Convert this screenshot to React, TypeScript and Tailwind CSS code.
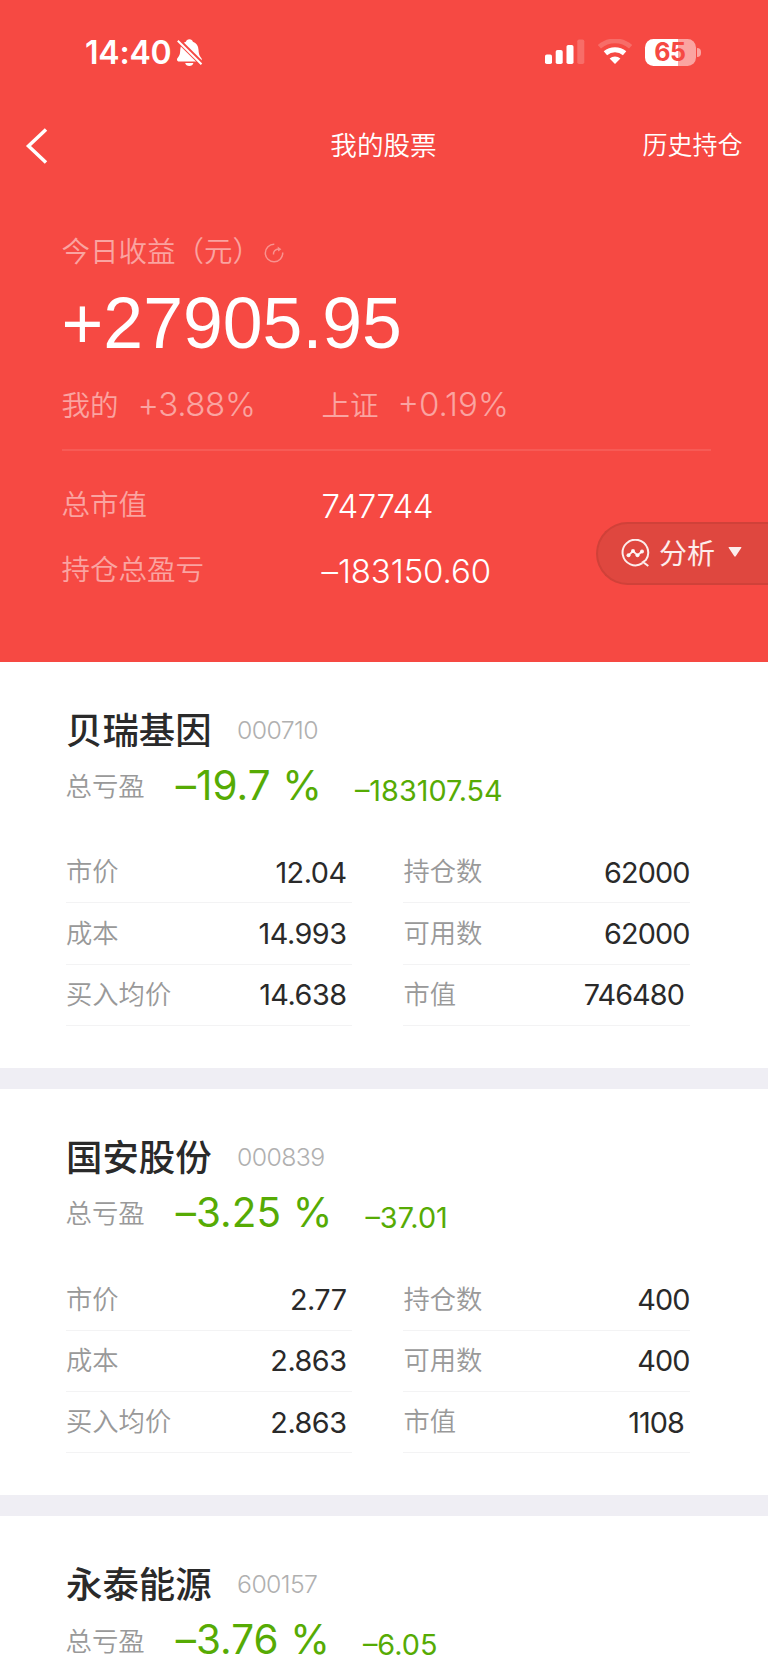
interface Cell {
  label: string;
  value: string;
}

interface Stock {
  name: string;
  code: string;
  percent: string;
  amount: string;
  left: Cell[];
  right: Cell[];
}

const stocks: Stock[] = [
  {
    name: "贝瑞基因",
    code: "000710",
    percent: "–19.7 %",
    amount: "–183107.54",
    left: [
      { label: "市价", value: "12.04" },
      { label: "成本", value: "14.993" },
      { label: "买入均价", value: "14.638" },
    ],
    right: [
      { label: "持仓数", value: "62000" },
      { label: "可用数", value: "62000" },
      { label: "市值", value: "746480" },
    ],
  },
  {
    name: "国安股份",
    code: "000839",
    percent: "–3.25 %",
    amount: "–37.01",
    left: [
      { label: "市价", value: "2.77" },
      { label: "成本", value: "2.863" },
      { label: "买入均价", value: "2.863" },
    ],
    right: [
      { label: "持仓数", value: "400" },
      { label: "可用数", value: "400" },
      { label: "市值", value: "1108" },
    ],
  },
  {
    name: "永泰能源",
    code: "600157",
    percent: "–3.76 %",
    amount: "–6.05",
    left: [],
    right: [],
  },
];

const StatusBar = () => (
  <div className="flex h-[104px] items-center pl-[85px] pr-[67.5px]">
    <span className="mt-[2px] text-[32px] font-semibold leading-none tracking-[-0.2px]">14:40</span>
    <svg className="ml-[6px] mt-[1px]" width="26" height="28" viewBox="0 0 26 28" fill="none">
      <path
        d="M12.4 0.3c1.9 0 3.1 1 3.5 2.4 3.6 1.2 5.4 4.2 5.6 8.1.2 4 .8 5.6 2 7.2.8 1 1.3 1.7 1.3 2.6 0 1.3-.9 1.9-2.4 1.9H2.4C.9 22.5 0 21.9 0 20.7c0-2 2.5-3 3-6.7.5-5.2.3-9.8 5.9-11.3.4-1.4 1.6-2.4 3.5-2.4z"
        fill="#fff"
      />
      <path d="M8.2 23.9h8.2c-.4 1.9-2 3-4.1 3s-3.7-1.1-4.1-3z" fill="#fff" />
      <path d="M0 0.3L25.5 25.5" stroke="#f64943" strokeWidth="5" />
      <path d="M0.8 1.7L24.5 25.2" stroke="#fff" strokeWidth="2" />
    </svg>

    <div className="ml-auto flex items-center">
      <svg width="40" height="26" viewBox="0 0 40 26" fill="#fff">
        <rect x="0" y="15.5" width="7" height="9.5" rx="1.8" />
        <rect x="10.7" y="11" width="7" height="14" rx="1.8" />
        <rect x="21.5" y="6" width="7" height="19" rx="1.8" />
        <rect x="32.3" y="0.5" width="7" height="24.5" rx="1.8" opacity="0.2" />
      </svg>
      <svg className="ml-[12px]" width="36" height="26" viewBox="0 0 36 26" fill="none" stroke="#fff">
        <path d="M2.4 7.8a23.6 23.6 0 0 1 31.2 0" strokeWidth="4.8" opacity="0.2" />
        <path d="M8.4 14.3a14.8 14.8 0 0 1 19.2 0" strokeWidth="5.2" />
        <path d="M12.6 19.4a8.6 8.6 0 0 1 10.8 0L18 25z" fill="#fff" stroke="none" />
      </svg>
      <div className="ml-[12px] flex h-[27px] w-[51px] items-center justify-center rounded-[8.5px] bg-[linear-gradient(90deg,#fff_65%,rgba(255,255,255,0.5)_65%)]">
        <span className="text-[25px] font-bold leading-none tracking-[-0.4px] text-[#f64943]">65</span>
      </div>
      <div className="ml-[1.5px] h-[9px] w-[3.5px] rounded-r-full bg-white/50" />
    </div>
  </div>
);

const NavBar = () => (
  <div className="grid h-[83px] grid-cols-3 items-center pl-[24.5px] pr-[25.5px]">
    <svg width="24" height="36" viewBox="0 0 24 36" fill="none" stroke="#fff" strokeWidth="3.5">
      <path d="M21 1.5L3.5 18L21 34.5" />
    </svg>
    <h1 className="text-center text-[26.6px] font-[350] leading-none">我的股票</h1>
    <span className="text-right text-[25px] font-[350] leading-none">历史持仓</span>
  </div>
);

const Summary = () => (
  <div className="flex flex-col pl-[61.5px] pr-[57px] pt-[45px]">
    <div className="flex h-[40px] items-center text-[28.5px] font-[350] text-white/50">
      <span className="whitespace-nowrap">今日收益（元）</span>
      <svg className="ml-[3px] mt-[1px]" width="20" height="20" viewBox="0 0 20 20" fill="none" stroke="#fff" strokeWidth="1.5" opacity="0.4">
        <path d="M10.3 1.3A8.7 8.7 0 1 0 18.7 9.5" />
        <path d="M9.5 11.5c-.4-3 1.5-5.3 5.5-5.4" />
        <path d="M13.6 3.4L17.4 6.2L14.2 8.6z" fill="#fff" stroke="none" />
      </svg>
    </div>
    <div className="flex h-[104px] items-center font-['Liberation_Sans',sans-serif] text-[71.6px] leading-none">
      +27905.95
    </div>
    <div className="mt-px flex h-[58px] items-center text-white/50">
      <div className="flex w-[260px] items-center">
        <span className="text-[28.5px] font-[350]">我的</span>
        <span className="-mt-[2px] ml-[19px] text-[33px] font-[350] tracking-[-0.4px]">+3.88%</span>
      </div>
      <span className="text-[28.5px] font-[350]">上证</span>
      <span className="-mt-[2px] ml-[19px] text-[33px] font-[350]">+0.19%</span>
    </div>
    <div className="mt-[14px] h-[2px] bg-white/10" />
    <div className="mt-[22px] flex h-[65px] items-center">
      <span className="w-[260px] text-[28.5px] font-[350] text-white/50">总市值</span>
      <span className="mt-[2px] text-[33px] font-[350] tracking-[-0.5px]">747744</span>
    </div>
    <div className="flex h-[65px] items-center">
      <span className="w-[260px] text-[28.5px] font-[350] text-white/50">持仓总盈亏</span>
      <span className="mt-[2px] text-[33px] font-[350] tracking-[-0.1px]">–183150.60</span>
    </div>
  </div>
);

const AnalysisButton = () => (
  <button className="absolute right-0 top-[522px] flex h-[63px] w-[172px] items-center rounded-l-full border-2 border-r-0 border-[#d04139] bg-[#df473f] pl-[23px] text-white/90">
    <svg className="-mt-[1px]" width="29" height="29" viewBox="0 0 29 29" fill="none" stroke="currentColor" strokeWidth="2">
      <path d="M21.5 24.2A12.8 12.8 0 1 1 24.8 21L22 23L27.3 27" />
      <path d="M7.5 16.3L12 12L16.5 16.3L21 12.5" strokeWidth="1.8" />
      <g fill="currentColor" stroke="none">
        <circle cx="7.5" cy="16.3" r="2" />
        <circle cx="12" cy="12" r="2" />
        <circle cx="16.5" cy="16.3" r="2" />
        <circle cx="21" cy="12.5" r="2" />
      </g>
    </svg>
    <span className="ml-[9px] text-[28px] leading-none">分析</span>
    <svg className="-mt-[4px] ml-[13px]" width="14" height="10" viewBox="0 0 14 10" fill="currentColor">
      <path d="M1.3 0h11.4c.7 0 .9.5.5 1L7.7 9.3c-.4.6-1 .6-1.4 0L.8 1C.4.5.6 0 1.3 0z" />
    </svg>
  </button>
);

const CellColumn = ({ cells, inset }: { cells: Cell[]; inset?: boolean }) => (
  <div className="flex w-[286.5px] flex-col">
    {cells.map((c) => (
      <div
        key={c.label}
        className={`flex h-[61.4px] items-center justify-between border-b-[1.5px] border-[#f3f3f4] pl-[0.5px] ${
          inset || c.label === "市值" ? "pr-[5.5px]" : ""
        }`}
      >
        <span className="text-[26.3px] font-[350] text-[#999]">{c.label}</span>
        <span
          className={`text-[28.8px] font-normal text-[#2a2a2a] ${
            inset ? "tracking-[-0.5px]" : "tracking-[-0.9px]"
          }`}
        >
          {c.value}
        </span>
      </div>
    ))}
  </div>
);

const StockCard = ({ stock }: { stock: Stock }) => (
  <section className="h-[427.2px] shrink-0 border-b-[21px] border-[#efeef4] bg-white pl-[65.5px] pt-[44.5px]">
    <div className="flex h-[50px] items-center">
      <h2 className="ml-[0.5px] text-[36.4px] font-medium leading-none text-[#2a2a2a]">{stock.name}</h2>
      <span className="-mt-[2px] ml-[25.5px] text-[24.8px] font-light leading-none tracking-[-0.6px] text-[#b0b0b0]">
        {stock.code}
      </span>
    </div>
    <div className="flex h-[60px] items-center whitespace-nowrap">
      <span className="mt-px text-[26.4px] font-[350] leading-none text-[#999]">总亏盈</span>
      <span className="ml-[31px] text-[40.4px] font-normal leading-none tracking-[0.1px] text-[#56ab04]">
        {stock.percent}
      </span>
      <span className="ml-[33px] mt-[11px] text-[28.8px] font-normal leading-none text-[#56ab04]">
        {stock.amount}
      </span>
    </div>
    <div className="mt-[26px] flex gap-[51px]">
      <CellColumn cells={stock.left} inset />
      <CellColumn cells={stock.right} />
    </div>
  </section>
);

export default function App() {
  return (
    <main className="relative flex h-[1665px] w-[768px] flex-col overflow-hidden bg-white font-[Inter,'Noto_Sans_CJK_SC',sans-serif]">
      <header className="h-[661.5px] shrink-0 bg-[#f64943] text-white">
        <StatusBar />
        <NavBar />
        <Summary />
      </header>
      {stocks.map((s) => (
        <StockCard key={s.code} stock={s} />
      ))}
      <AnalysisButton />
    </main>
  );
}
